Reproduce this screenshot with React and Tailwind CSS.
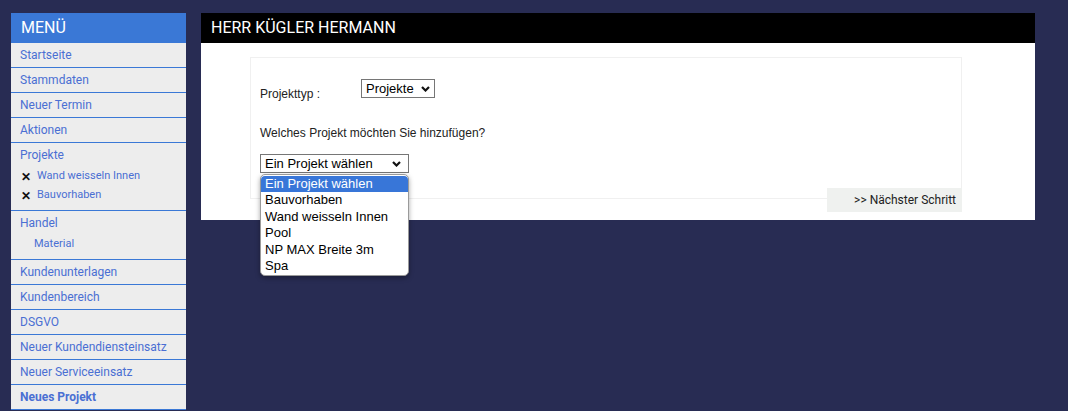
// Neues Projekt – Auswahlseite mit offenem Projekt-Dropdown
const menu = [
  { label: "Startseite" },
  { label: "Stammdaten" },
  { label: "Neuer Termin" },
  { label: "Aktionen" },
  { label: "Projekte", kinder: ["Wand weisseln Innen", "Bauvorhaben"], typ: "x" },
  { label: "Handel", kinder: ["Material"], typ: "einzug" },
  { label: "Kundenunterlagen" },
  { label: "Kundenbereich" },
  { label: "DSGVO" },
  { label: "Neuer Kundendiensteinsatz" },
  { label: "Neuer Serviceeinsatz" },
  { label: "Neues Projekt", aktiv: true },
];

const optionen = ["Ein Projekt wählen", "Bauvorhaben", "Wand weisseln Innen", "Pool", "NP MAX Breite 3m", "Spa"];

function Chevron() {
  return (
    <svg width="9" height="6" viewBox="0 0 9 6" className="shrink-0">
      <polyline points="1,1 4.5,4.5 8,1" fill="none" stroke="#111" strokeWidth="2.2" />
    </svg>
  );
}

function Sidebar() {
  return (
    <div className="w-[175px] shrink-0 bg-[#ededed] font-['Roboto',sans-serif]">
      <div className="h-[30px] bg-[#3a78d6] px-[10px] flex items-center text-white text-[16px]">MENÜ</div>
      {menu.map((m) => (
        <div key={m.label} className="border-b border-[#3a78d6]">
          <div className={`h-[24px] px-[9px] flex items-center text-[12px] text-[#4a6fd3] ${m.aktiv ? "font-bold" : ""}`}>
            {m.label}
          </div>
          {m.kinder && (
            <div className="pb-[5px]">
              {m.kinder.map((k) => (
                <div key={k} className="h-[19px] flex items-center text-[11px] text-[#4a6fd3]">
                  {m.typ === "x" ? (
                    <>
                      <span className="w-[26px] pl-[10px] text-[12px] font-bold text-[#111]">✕</span>
                      {k}
                    </>
                  ) : (
                    <span className="pl-[23px]">{k}</span>
                  )}
                </div>
              ))}
            </div>
          )}
        </div>
      ))}
    </div>
  );
}

function Hauptbereich() {
  return (
    <div className="w-[834px] shrink-0">
      <div className="h-[30px] bg-black px-[10px] flex items-center text-white text-[16px] font-['Roboto',sans-serif]">
        HERR KÜGLER HERMANN
      </div>
      <div className="bg-white pt-[14px] pb-[8px] pl-[49px] font-['Liberation_Sans',Arial,sans-serif]">
        <div className="w-[712px]">
          <div className="border border-[#f0f0f0] pl-[9px] pt-[21px] h-[142px]">
            <div className="flex items-start">
              <span className="w-[101px] pt-[6px] text-[12px] text-[#222]">Projekttyp :</span>
              <div className="h-[19px] w-[74px] border border-[#767676] flex items-center justify-between px-[4px] text-[13px] text-black">
                Projekte
                <Chevron />
              </div>
            </div>
            <div className="mt-[21px] text-[12px] text-[#222]">Welches Projekt möchten Sie hinzufügen?</div>
            <div className="relative mt-[12px] w-[149px]">
              <div className="h-[19px] border border-[#767676] flex items-center justify-between pl-[4px] pr-[7px] text-[13px] text-black">
                Ein Projekt wählen
                <Chevron />
              </div>
              <div className="absolute left-0 top-[20px] z-20 w-[149px] rounded-[5px] border border-[#9a9a9a] bg-white py-[1px] shadow-[0_2px_5px_rgba(0,0,0,0.35)] text-[13px] text-black">
                {optionen.map((o, i) => (
                  <div
                    key={o}
                    className={`h-[16.4px] leading-[16px] px-[4px] ${i === 0 ? "bg-[#3876d8] text-white rounded-t-[4px]" : ""}`}
                  >
                    {o}
                  </div>
                ))}
              </div>
            </div>
          </div>
          <div className="flex justify-end -mt-[11px] relative">
            <div className="h-[24px] w-[135px] bg-[#eff1ef] flex items-center justify-end pr-[6px] text-[12px] text-[#222] font-['Roboto',sans-serif]">
              &gt;&gt; Nächster Schritt
            </div>
          </div>
        </div>
      </div>
    </div>
  );
}

export default function App() {
  return (
    <div className="min-h-[411px] bg-[#282c53] pl-[11px] pt-[13px] flex gap-[15px] items-start">
      <Sidebar />
      <Hauptbereich />
    </div>
  );
}
